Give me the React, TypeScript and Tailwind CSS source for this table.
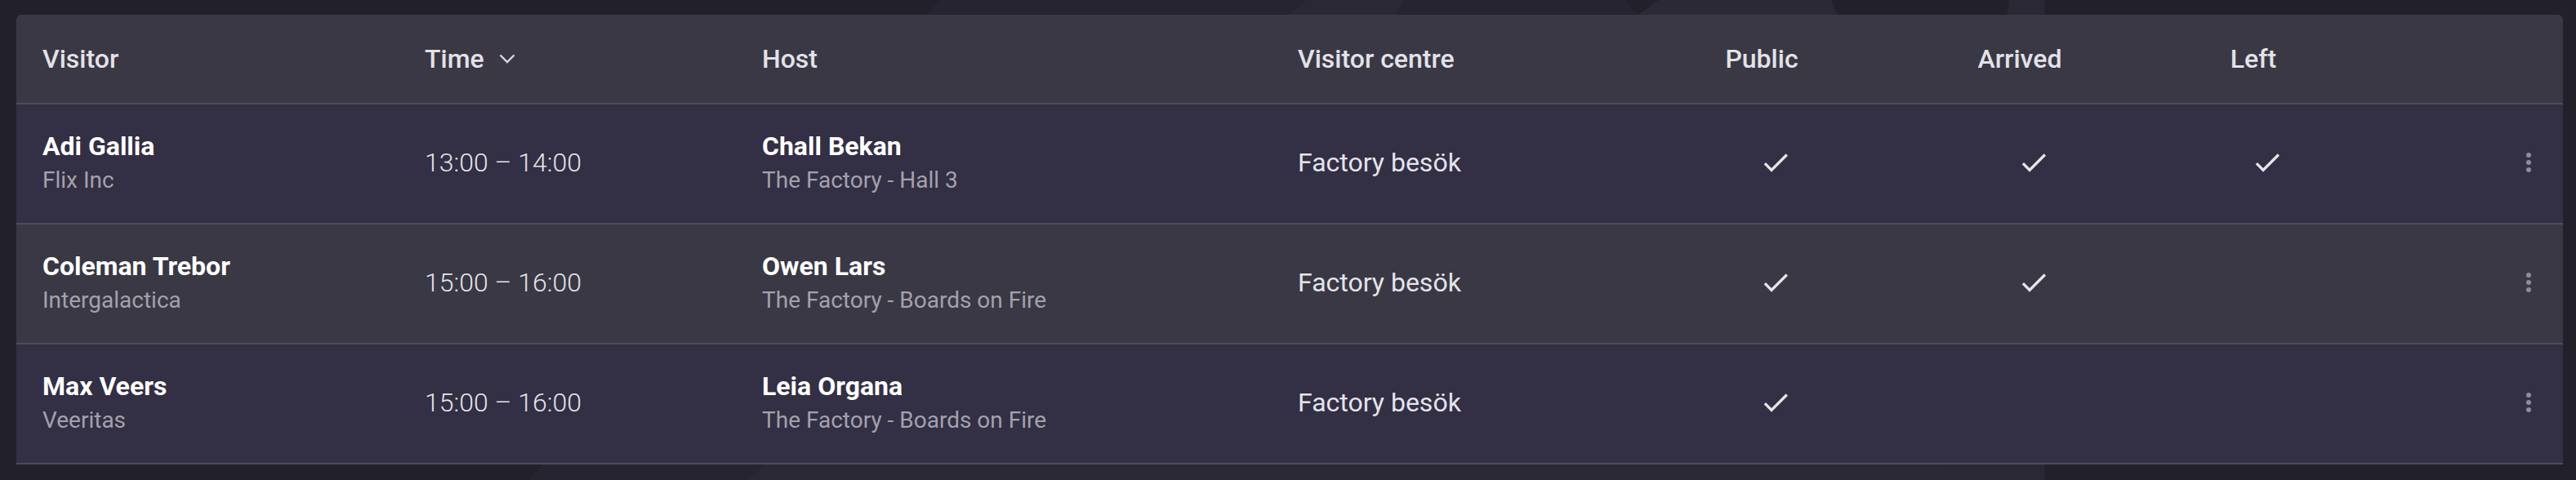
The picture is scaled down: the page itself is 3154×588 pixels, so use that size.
import React from "react";

type Visit = {
  name: string;
  company: string;
  time: string;
  host: string;
  location: string;
  centre: string;
  isPublic: boolean;
  arrived: boolean;
  left: boolean;
};

const visits: Visit[] = [
  {
    name: "Adi Gallia",
    company: "Flix Inc",
    time: "13:00 – 14:00",
    host: "Chall Bekan",
    location: "The Factory - Hall 3",
    centre: "Factory besök",
    isPublic: true,
    arrived: true,
    left: true,
  },
  {
    name: "Coleman Trebor",
    company: "Intergalactica",
    time: "15:00 – 16:00",
    host: "Owen Lars",
    location: "The Factory - Boards on Fire",
    centre: "Factory besök",
    isPublic: true,
    arrived: true,
    left: false,
  },
  {
    name: "Max Veers",
    company: "Veeritas",
    time: "15:00 – 16:00",
    host: "Leia Organa",
    location: "The Factory - Boards on Fire",
    centre: "Factory besök",
    isPublic: true,
    arrived: false,
    left: false,
  },
];

const cols =
  "grid grid-cols-[468px_413px_656px_433px_368px_264px_308px_1fr]";

const CheckIcon = () => (
  <svg width="40" height="40" viewBox="0 0 24 24" className="text-[#e6e5ea]">
    <path fill="currentColor" d="M9 16.17 4.83 12l-1.42 1.41L9 19 21 7l-1.41-1.41z" />
  </svg>
);

const MoreIcon = () => (
  <svg width="36" height="36" viewBox="0 0 24 24" className="text-[#8e8c98]">
    <circle cx="12" cy="6" r="2" fill="currentColor" />
    <circle cx="12" cy="12" r="2" fill="currentColor" />
    <circle cx="12" cy="18" r="2" fill="currentColor" />
  </svg>
);

const Chevron = () => (
  <svg width="20" height="12" viewBox="0 0 20 12" className="ml-[18px] text-[#d9d8de]">
    <polyline points="1.5,1.5 10,10 18.5,1.5" fill="none" stroke="currentColor" strokeWidth="2.4" />
  </svg>
);

const CenterHead = ({ label }: { label: string }) => (
  <div className="flex items-center justify-center">
    <span>{label}</span>
    <span className="w-[34px]" />
  </div>
);

export default function App() {
  return (
    <div className="relative w-[3154px] h-[588px] overflow-hidden bg-[#22212b] pt-[18px] pl-[20px] font-['Roboto','Noto_Sans',sans-serif]">
      {/* decorative background shapes */}
      <svg className="absolute inset-0" width="3154" height="588" viewBox="0 0 3154 588">
        <polygon points="1150,0 1990,0 2503,588 648,588" fill="#262431" />
        <polygon points="1599,0 1719,0 1400,588 915,588" fill="#2a2835" />
        <polygon points="2031,0 2242,0 2503,588 1207,588" fill="#2b2936" />
        <polygon points="2460,0 2503,0 2503,588 2380,588" fill="#2a2834" />
      </svg>

      <div className="relative w-[3118px] overflow-hidden rounded-t-[6px] text-[32px]">
        {/* header */}
        <div className={`${cols} h-[110px] items-center border-b-2 border-[#4f4c5c] bg-[#3a3845] font-medium text-[#e3e2e8]`}>
          <div className="pl-[32px]">Visitor</div>
          <div className="flex items-center pl-[32px]">
            <span>Time</span>
            <Chevron />
          </div>
          <div className="pl-[32px]">Host</div>
          <div className="pl-[32px]">Visitor centre</div>
          <CenterHead label="Public" />
          <CenterHead label="Arrived" />
          <CenterHead label="Left" />
          <div />
        </div>

        {visits.map((v, i) => (
          <div
            key={v.name}
            className={`${cols} h-[147px] items-center border-b-2 border-[#4f4c5c] pb-[3px] ${
              i % 2 === 0 ? "bg-[#332f44]" : "bg-[#3a3845]"
            }`}
          >
            <div className="pl-[32px]">
              <div className="font-bold leading-[40px] text-white">{v.name}</div>
              <div className="mt-[4px] text-[28px] leading-[36px] text-[#a3a1ad]">{v.company}</div>
            </div>
            <div className="pl-[32px] font-light text-[#e4e3e9]">{v.time}</div>
            <div className="pl-[32px]">
              <div className="font-bold leading-[40px] text-white">{v.host}</div>
              <div className="mt-[4px] text-[28px] leading-[36px] text-[#a3a1ad]">{v.location}</div>
            </div>
            <div className="pl-[32px] text-[#e4e3e9]">{v.centre}</div>
            <div className="flex justify-center">{v.isPublic && <CheckIcon />}</div>
            <div className="flex justify-center">{v.arrived && <CheckIcon />}</div>
            <div className="flex justify-center">{v.left && <CheckIcon />}</div>
            <div className="flex justify-end pr-[24px]">
              <MoreIcon />
            </div>
          </div>
        ))}
      </div>
    </div>
  );
}
